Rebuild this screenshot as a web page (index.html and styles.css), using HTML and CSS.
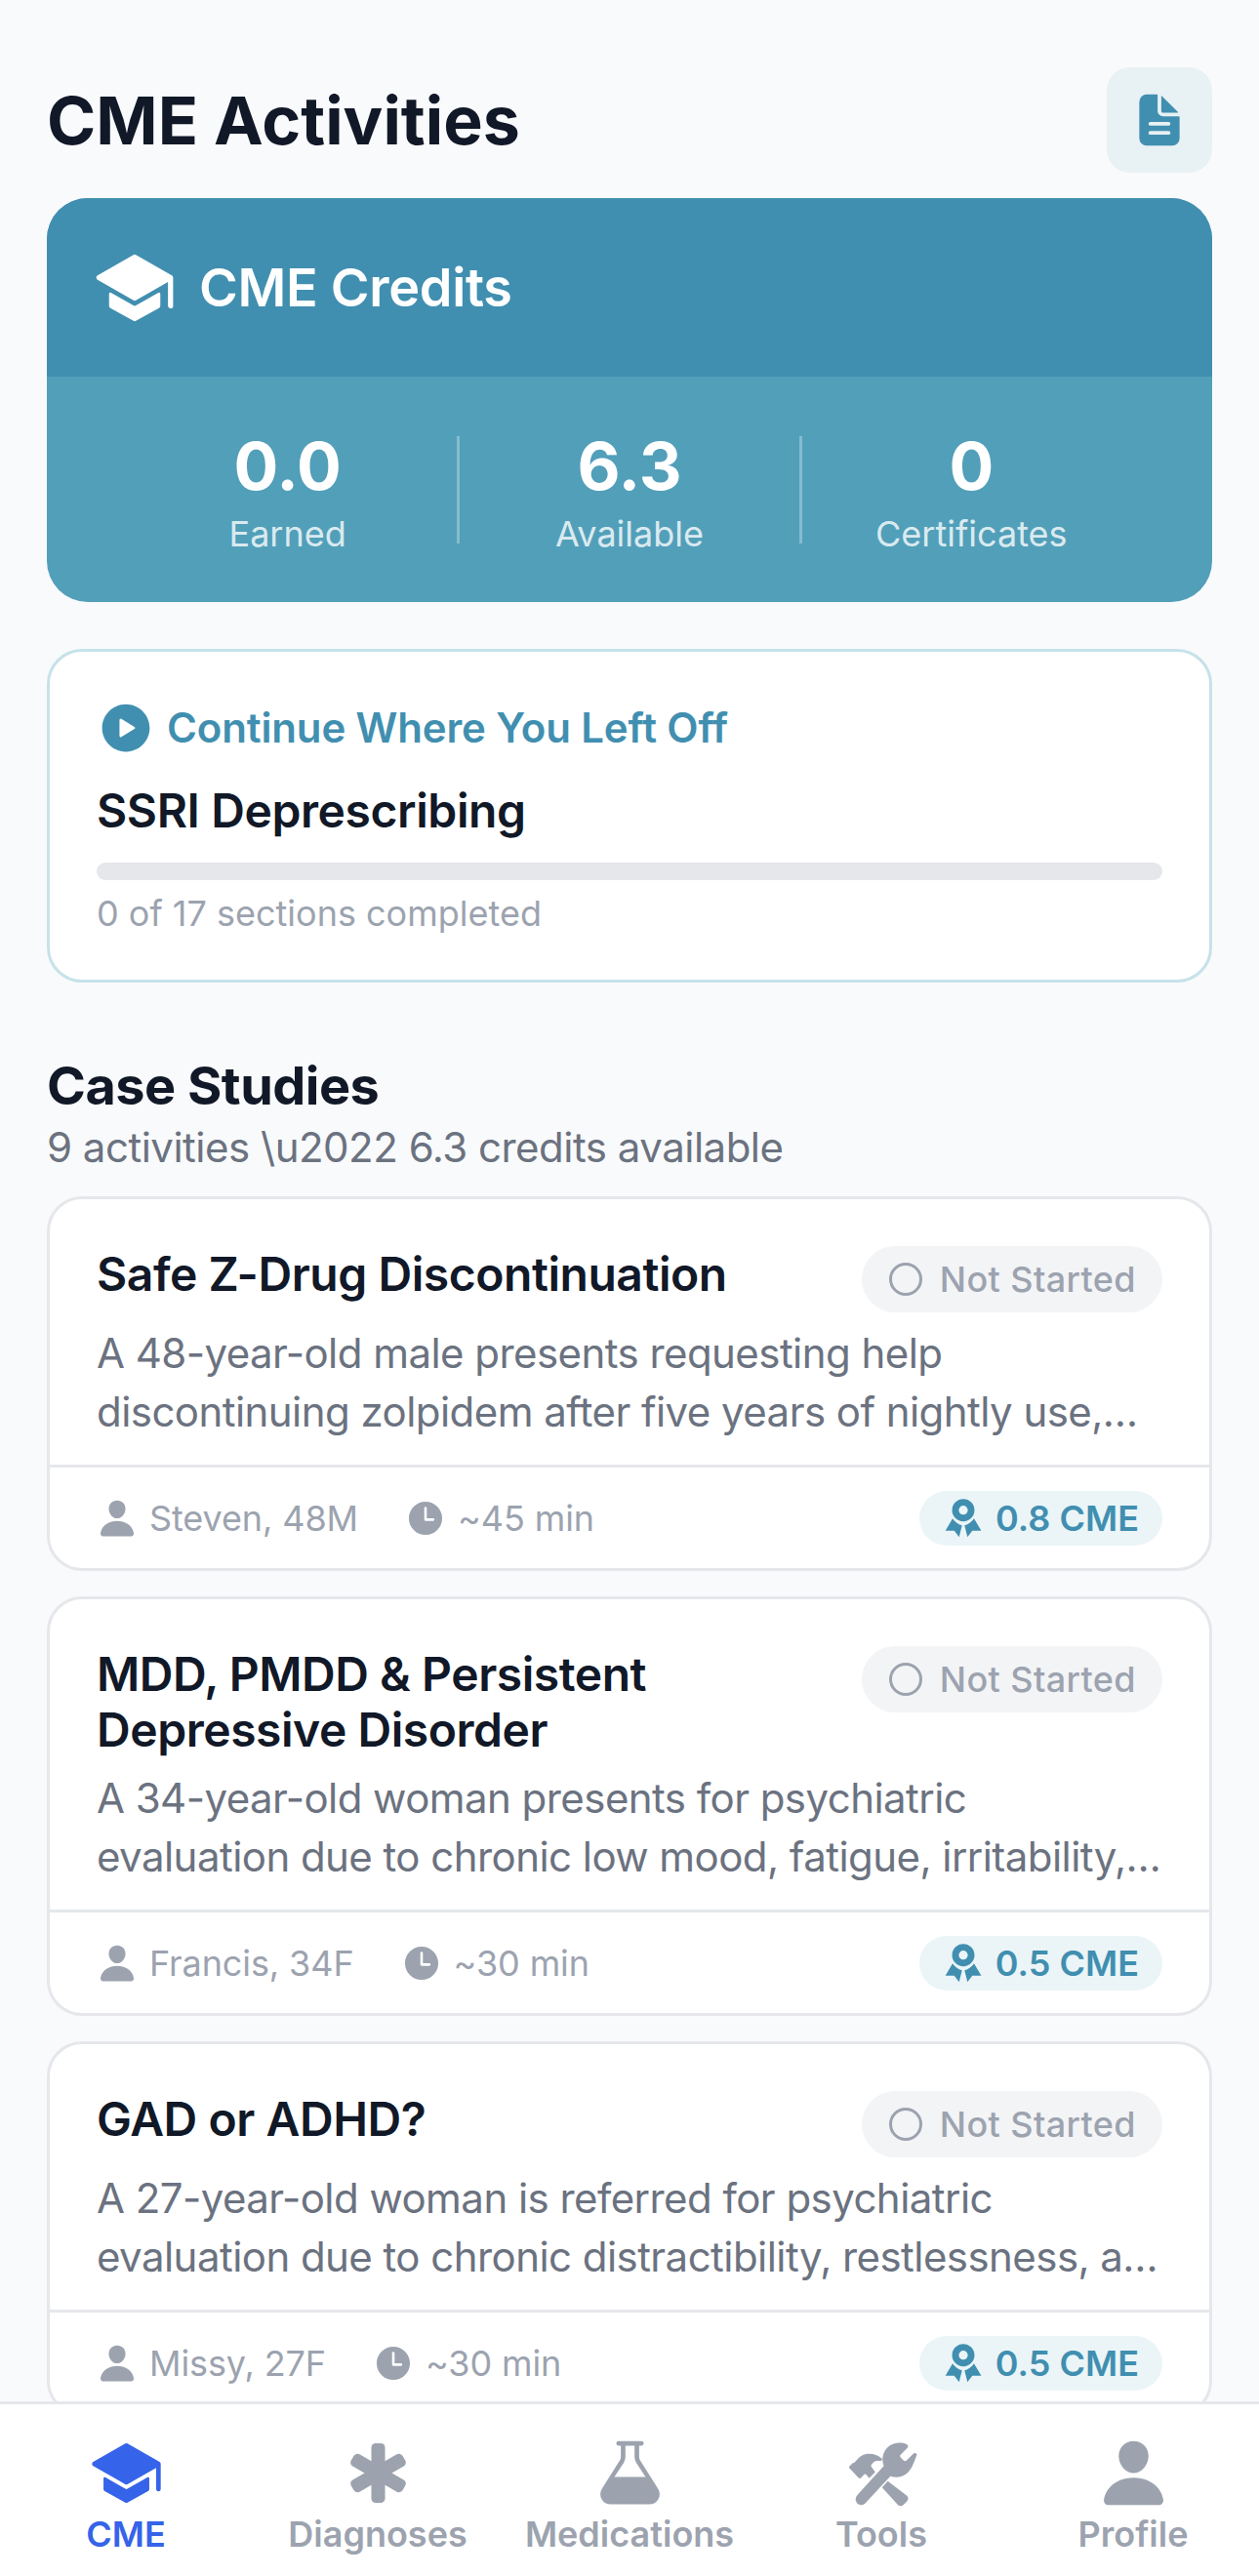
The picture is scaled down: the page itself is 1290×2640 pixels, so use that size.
FILE: index.html
```html
<!DOCTYPE html>
<html lang="en">

<head>
	<meta charset="UTF-8">
	<meta name="viewport" content="width=device-width, initial-scale=1.0">
	<title>CME Activities</title>
	<link rel="stylesheet" href="styles.css">
</head>

<body>

	<svg class="icon-defs" xmlns="http://www.w3.org/2000/svg">
		<symbol id="i-school" viewBox="0 0 512 512">
			<path d="M256 368a16 16 0 01-7.94-2.11L108 285.84a8 8 0 00-12 6.94V368a16 16 0 008.23 14l144 80a16 16 0 0015.54 0l144-80a16 16 0 008.23-14v-75.22a8 8 0 00-12-6.94l-140.06 80.05A16 16 0 01256 368z"/>
			<path d="M495.92 190.5s0-.08 0-.11a16 16 0 00-8-12.28l-224-128a16 16 0 00-15.88 0l-224 128a16 16 0 000 27.78l224 128a16 16 0 0015.88 0L461 221.28a2 2 0 013 1.74v144.53c0 8.61 6.62 16 15.23 16.43A16 16 0 00496 368V192a14.76 14.76 0 00-.08-1.5z"/>
		</symbol>
		<symbol id="i-doc" viewBox="0 0 512 512">
			<path d="M428 224H288a48 48 0 01-48-48V36a4 4 0 00-4-4h-92a64 64 0 00-64 64v320a64 64 0 0064 64h224a64 64 0 0064-64V228a4 4 0 00-4-4zm-92 160H176a16 16 0 010-32h160a16 16 0 010 32zm0-80H176a16 16 0 010-32h160a16 16 0 010 32z"/>
			<path d="M419.22 188.59L275.41 44.78a2 2 0 00-3.41 1.41V176a16 16 0 0016 16h129.81a2 2 0 001.41-3.41z"/>
		</symbol>
		<symbol id="i-play" viewBox="0 0 512 512">
			<path d="M256 48C141.31 48 48 141.31 48 256s93.31 208 208 208 208-93.31 208-208S370.69 48 256 48zm74.77 217.3l-114.45 69.14a10.78 10.78 0 01-16.32-9.31V186.87a10.78 10.78 0 0116.32-9.31l114.45 69.14a10.89 10.89 0 010 18.6z"/>
		</symbol>
		<symbol id="i-person" viewBox="0 0 512 512">
			<path d="M332.64 64.58C313.18 43.57 286 32 256 32c-30.16 0-57.43 11.5-76.8 32.38-19.58 21.11-29.12 49.8-26.88 80.78C156.76 206.28 203.27 256 256 256s99.16-49.71 103.67-110.82c2.27-30.7-7.33-59.33-27.03-80.6zM432 480H80a31 31 0 01-24.2-11.13c-6.5-7.77-9.12-18.38-7.18-29.11C57.06 392.94 83.4 353.61 124.8 326c36.78-24.51 83.37-38 131.2-38s94.42 13.5 131.2 38c41.4 27.6 67.74 66.93 76.18 113.75 1.94 10.73-.68 21.34-7.18 29.11A31 31 0 01432 480z"/>
		</symbol>
		<symbol id="i-time" viewBox="0 0 512 512">
			<path d="M256 48C141.13 48 48 141.13 48 256s93.13 208 208 208 208-93.13 208-208S370.87 48 256 48zm96 240h-96a16 16 0 01-16-16V128a16 16 0 0132 0v128h80a16 16 0 010 32z"/>
		</symbol>
		<symbol id="i-ribbon" viewBox="0 0 512 512">
			<path fill-rule="evenodd" d="M256 15a140 140 0 110 280 140 140 0 010-280zm0 84a56 56 0 100 112 56 56 0 000-112z"/>
			<path d="M122 258c26 40 68 70 118 87l-36 145-61-78H33z"/>
			<path d="M390 258c-26 40-68 70-118 87l36 145 61-78h112z"/>
		</symbol>
		<symbol id="i-medical" viewBox="0 0 512 512">
			<rect x="208" y="48" width="96" height="416" rx="30"/>
			<rect x="208" y="48" width="96" height="416" rx="30" transform="rotate(60 256 256)"/>
			<rect x="208" y="48" width="96" height="416" rx="30" transform="rotate(-60 256 256)"/>
		</symbol>
		<symbol id="i-flask" viewBox="0 0 512 512">
			<path fill-rule="evenodd" d="M452 365L327 167a48 48 0 01-7-26V64h16a16 16 0 000-32H176a16 16 0 000 32h16v77a48 48 0 01-7 26L60 365a72 72 0 0061 110h270a72 72 0 0061-110zM224 64h64v77a80 80 0 0012 43l65 100H147l65-100a80 80 0 0012-43z"/>
		</symbol>
		<symbol id="i-tools" viewBox="0 0 512 512">
			<path d="M502 126a16 16 0 00-26-5l-46 46a16 16 0 01-22 0l-19-19a16 16 0 010-22l46-46a16 16 0 00-5-26c-48-20-108-8-140 30-30 34-36 82-20 122L108 384c-22 24-40 40-34 66a40 40 0 0068 16l174-188c38 14 84 8 116-20 40-34 52-90 70-132z"/>
			<path d="M34 226l58 62a14 14 0 0020 0l20-22a10 10 0 0114 0l22 26 42-42-26-36a12 12 0 01-2-14l6-8c8-10 18-22 36-22h24a10 10 0 006-18c-22-16-50-30-86-30-40 0-66 18-86 42l-22 22-6-2-20 20a14 14 0 000 22z"/>
			<path d="M298 312l-40 44 110 122a28 28 0 0040 0l24-24a28 28 0 000-40z"/>
		</symbol>
	</svg>

	<div class="app">
		<main class="screen">
			<header class="top-bar">
				<h1>CME Activities</h1>
				<button class="doc-btn"><svg class="icon"><use href="#i-doc"/></svg></button>
			</header>

			<section class="credits">
				<div class="credits-head">
					<svg class="icon"><use href="#i-school"/></svg>
					<h2>CME Credits</h2>
				</div>
				<div class="credits-stats">
					<div class="stat"><strong>0.0</strong><span>Earned</span></div>
					<div class="stat-line"></div>
					<div class="stat"><strong>6.3</strong><span>Available</span></div>
					<div class="stat-line"></div>
					<div class="stat"><strong>0</strong><span>Certificates</span></div>
				</div>
			</section>

			<section class="resume">
				<div class="resume-label">
					<svg class="icon"><use href="#i-play"/></svg>
					<span>Continue Where You Left Off</span>
				</div>
				<h3>SSRI Deprescribing</h3>
				<div class="progress"></div>
				<p>0 of 17 sections completed</p>
			</section>

			<h2 class="section-title">Case Studies</h2>
			<p class="section-sub">9 activities \u2022 6.3 credits available</p>

			<article class="case">
				<div class="case-body">
					<div class="case-top">
						<h3>Safe Z-Drug Discontinuation</h3>
						<span class="status"><i></i>Not Started</span>
					</div>
					<p class="case-text">A 48-year-old male presents requesting help<br>discontinuing zolpidem after five years of nightly use,…</p>
				</div>
				<div class="case-foot">
					<span class="meta"><svg class="icon"><use href="#i-person"/></svg>Steven, 48M</span>
					<span class="meta"><svg class="icon"><use href="#i-time"/></svg>~45 min</span>
					<span class="credit"><svg class="icon"><use href="#i-ribbon"/></svg>0.8 CME</span>
				</div>
			</article>

			<article class="case">
				<div class="case-body">
					<div class="case-top">
						<h3>MDD, PMDD &amp; Persistent Depressive Disorder</h3>
						<span class="status"><i></i>Not Started</span>
					</div>
					<p class="case-text">A 34-year-old woman presents for psychiatric<br>evaluation due to chronic low mood, fatigue, irritability,…</p>
				</div>
				<div class="case-foot">
					<span class="meta"><svg class="icon"><use href="#i-person"/></svg>Francis, 34F</span>
					<span class="meta"><svg class="icon"><use href="#i-time"/></svg>~30 min</span>
					<span class="credit"><svg class="icon"><use href="#i-ribbon"/></svg>0.5 CME</span>
				</div>
			</article>

			<article class="case">
				<div class="case-body">
					<div class="case-top">
						<h3>GAD or ADHD?</h3>
						<span class="status"><i></i>Not Started</span>
					</div>
					<p class="case-text">A 27-year-old woman is referred for psychiatric<br>evaluation due to chronic distractibility, restlessness, a…</p>
				</div>
				<div class="case-foot">
					<span class="meta"><svg class="icon"><use href="#i-person"/></svg>Missy, 27F</span>
					<span class="meta"><svg class="icon"><use href="#i-time"/></svg>~30 min</span>
					<span class="credit"><svg class="icon"><use href="#i-ribbon"/></svg>0.5 CME</span>
				</div>
			</article>
		</main>

		<nav class="tabs">
			<a class="tab active"><svg class="icon"><use href="#i-school"/></svg>CME</a>
			<a class="tab"><svg class="icon"><use href="#i-medical"/></svg>Diagnoses</a>
			<a class="tab"><svg class="icon"><use href="#i-flask"/></svg>Medications</a>
			<a class="tab"><svg class="icon"><use href="#i-tools"/></svg>Tools</a>
			<a class="tab"><svg class="icon"><use href="#i-person"/></svg>Profile</a>
		</nav>
	</div>

</body>

</html>
```

FILE: styles.css
```css
* {
	box-sizing: border-box;
}

html,
body {
	margin: 0;
	padding: 0;
}

body {
	font-family: 'Inter', 'Noto Sans', sans-serif;
	background: #f9fafb;
	color: #111827;
}

.icon-defs {
	display: none;
}

.icon {
	display: block;
	flex: none;
	fill: currentColor;
}

.app {
	display: flex;
	flex-direction: column;
	height: 2640px;
	overflow: hidden;
}

.screen {
	flex: 1;
	min-height: 0;
	overflow: hidden;
	padding: 69px 48px 0;
}

.top-bar {
	display: flex;
	justify-content: space-between;
	align-items: center;
	height: 108px;
	margin-bottom: 26px;
}

h1 {
	margin: 0;
	font-size: 68px;
	font-weight: 700;
}

.doc-btn {
	display: flex;
	align-items: center;
	justify-content: center;
	width: 108px;
	height: 108px;
	padding: 0;
	border: none;
	border-radius: 24px;
	background: #e8f1f4;
	color: #418fb0;
}

.doc-btn .icon {
	width: 60px;
	height: 60px;
}

.credits {
	border-radius: 42px;
	overflow: hidden;
	color: white;
	background: #529fba;
}

.credits-head {
	display: flex;
	align-items: center;
	gap: 24px;
	height: 183px;
	padding: 0 48px;
	background: #418fb0;
}

.credits-head .icon {
	width: 84px;
	height: 84px;
}

.credits-head h2 {
	margin: 0;
	font-size: 54px;
	font-weight: 600;
	letter-spacing: -0.3px;
}

.credits-stats {
	display: flex;
	align-items: center;
	height: 231px;
	padding: 0 73px;
}

.stat {
	flex: 1;
	display: flex;
	flex-direction: column;
	align-items: center;
}

.stat strong {
	font-size: 68px;
	font-weight: 700;
	line-height: 84px;
}

.stat span {
	margin-top: 6px;
	font-size: 36px;
	line-height: 44px;
	color: rgba(255, 255, 255, 0.8);
}

.stat-line {
	width: 3px;
	height: 110px;
	background: rgba(255, 255, 255, 0.3);
}

.resume {
	margin-top: 48px;
	padding: 48px;
	height: 342px;
	background: white;
	border: 3px solid #c6e2ea;
	border-radius: 36px;
}

.resume-label {
	display: flex;
	align-items: center;
	gap: 12px;
	color: #418fb0;
	font-size: 42px;
	font-weight: 600;
	line-height: 60px;
	letter-spacing: -0.15px;
}

.resume-label .icon {
	width: 60px;
	height: 60px;
}

.resume h3 {
	margin: 26px 0 0;
	font-size: 48px;
	font-weight: 600;
	line-height: 58px;
	letter-spacing: -0.4px;
}

.progress {
	height: 18px;
	margin-top: 24px;
	border-radius: 9px;
	background: #e5e7eb;
}

.resume p {
	margin: 10px 0 0;
	font-size: 36px;
	line-height: 48px;
	color: #9ca3af;
}

.section-title {
	margin: 73px 0 0;
	font-size: 54px;
	font-weight: 700;
	line-height: 66px;
	letter-spacing: -0.5px;
}

.section-sub {
	margin: 4px 0 0;
	font-size: 42px;
	line-height: 52px;
	letter-spacing: -0.5px;
	color: #6b7280;
}

.case {
	margin-top: 26px;
	background: white;
	border: 3px solid #e5e7eb;
	border-radius: 36px;
	overflow: hidden;
}

.section-sub + .case {
	margin-top: 24px;
}

.case-body {
	padding: 48px 48px 24px;
}

.case-top {
	display: flex;
	justify-content: space-between;
	align-items: flex-start;
	gap: 36px;
}

.case-top h3 {
	margin: 0;
	font-size: 48px;
	font-weight: 600;
	line-height: 57px;
	letter-spacing: -0.45px;
}

.status {
	flex: none;
	display: flex;
	align-items: center;
	gap: 18px;
	height: 68px;
	padding: 0 27px 0 28px;
	border-radius: 34px;
	background: #f3f4f6;
	color: #9ca3af;
	font-size: 36px;
	font-weight: 500;
	letter-spacing: 0.4px;
}

.status i {
	width: 34px;
	height: 34px;
	border: 3px solid #9ca3af;
	border-radius: 50%;
}

.case-text {
	margin: 12px 0 0;
	font-size: 42px;
	line-height: 60px;
	letter-spacing: -0.55px;
	white-space: nowrap;
	color: #6b7280;
}

.case-foot {
	display: flex;
	align-items: center;
	gap: 48px;
	height: 106px;
	padding: 0 48px;
	border-top: 3px solid #e5e7eb;
}

.meta {
	display: flex;
	align-items: center;
	gap: 12px;
	font-size: 36px;
	letter-spacing: -0.1px;
	color: #9ca3af;
}

.meta .icon {
	width: 42px;
	height: 42px;
}

.credit {
	display: flex;
	align-items: center;
	gap: 12px;
	height: 56px;
	margin-left: auto;
	padding: 0 24px;
	border-radius: 28px;
	background: #ebf5f8;
	color: #418fb0;
	font-size: 36px;
	font-weight: 600;
}

.credit .icon {
	width: 42px;
	height: 42px;
}

.tabs {
	flex: none;
	display: flex;
	justify-content: space-between;
	height: 179px;
	padding: 33px 0 0;
	background: white;
	border-top: 3px solid #e5e7eb;
}

.tab {
	flex: 1;
	display: flex;
	flex-direction: column;
	align-items: center;
	font-size: 36px;
	font-weight: 600;
	line-height: 44px;
	color: #9ca3af;
}

.tab .icon {
	width: 75px;
	height: 75px;
	margin-bottom: 3px;
}

.tab.active {
	color: #3563e9;
}
```
